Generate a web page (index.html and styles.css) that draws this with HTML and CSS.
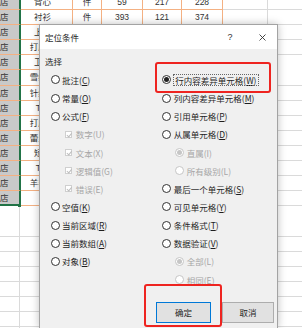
FILE: index.html
```html
<!DOCTYPE html>
<html lang="zh-CN">
  <head>
    <meta charset="UTF-8" />
    <title>定位条件</title>
    <link rel="stylesheet" href="styles.css">
  </head>
  <body>
    <div class="sheet">
      <div class="row"><span class="sel">店</span><span>背心</span><span>件</span><span>59</span><span>217</span><span>228</span></div>
      <div class="row"><span class="sel">店</span><span>衬衫</span><span>件</span><span>393</span><span>121</span><span>374</span></div>
      <div class="row"><span class="sel">店</span><span>上衣</span><span></span><span></span><span></span><span></span></div>
      <div class="row"><span class="sel">店</span><span>打底衫</span><span></span><span></span><span></span><span></span></div>
      <div class="row"><span class="sel">店</span><span>卫衣</span><span></span><span></span><span></span><span></span></div>
      <div class="row"><span class="sel">店</span><span>雪纺衫</span><span></span><span></span><span></span><span></span></div>
      <div class="row"><span class="sel">店</span><span>针织衫</span><span></span><span></span><span></span><span></span></div>
      <div class="row"><span class="sel">店</span><span>T恤</span><span></span><span></span><span></span><span></span></div>
      <div class="row"><span class="sel">店</span><span>打底裤</span><span></span><span></span><span></span><span></span></div>
      <div class="row"><span class="sel">店</span><span>蕾丝裙</span><span></span><span></span><span></span><span></span></div>
      <div class="row"><span class="sel">店</span><span>短裙</span><span></span><span></span><span></span><span></span></div>
      <div class="row"><span class="sel">店</span><span>T恤</span><span></span><span></span><span></span><span></span></div>
      <div class="row"><span class="sel">店</span><span>羊毛衫</span><span></span><span></span><span></span><span></span></div>
      <div class="row"><span class="sel">店</span><span></span><span></span><span></span><span></span><span></span></div>
    </div>
    <div class="handle"></div>

    <div class="dialog">
      <div class="titlebar">
        <span class="title">定位条件</span>
        <span class="help">?</span>
        <span class="close">
          <svg width="7" height="7" viewBox="0 0 7 7"><path d="M0.5 0.5L6.5 6.5M6.5 0.5L0.5 6.5" stroke="#333" stroke-width="0.9" /></svg>
        </span>
      </div>
      <div class="dialog-body">
        <div class="group-label">选择</div>
        <div class="options">
          <div class="col">
            <label class="opt"><span class="radio"></span>批注(<u>C</u>)</label>
            <label class="opt"><span class="radio"></span>常量(<u>O</u>)</label>
            <label class="opt"><span class="radio"></span>公式(<u>F</u>)</label>
            <label class="opt off"><span class="check"></span>数字(U)</label>
            <label class="opt off"><span class="check"></span>文本(X)</label>
            <label class="opt off"><span class="check"></span>逻辑值(G)</label>
            <label class="opt off"><span class="check"></span>错误(E)</label>
            <label class="opt"><span class="radio"></span>空值(<u>K</u>)</label>
            <label class="opt"><span class="radio"></span>当前区域(<u>R</u>)</label>
            <label class="opt"><span class="radio"></span>当前数组(<u>A</u>)</label>
            <label class="opt"><span class="radio"></span>对象(<u>B</u>)</label>
          </div>
          <div class="col">
            <label class="opt"><span class="radio on"></span><span class="focus">行内容差异单元格(<u>W</u>)</span></label>
            <label class="opt"><span class="radio"></span>列内容差异单元格(<u>M</u>)</label>
            <label class="opt"><span class="radio"></span>引用单元格(<u>P</u>)</label>
            <label class="opt"><span class="radio"></span>从属单元格(<u>D</u>)</label>
            <label class="opt sub off"><span class="radio on"></span>直属(I)</label>
            <label class="opt sub off"><span class="radio"></span>所有级别(L)</label>
            <label class="opt"><span class="radio"></span>最后一个单元格(<u>S</u>)</label>
            <label class="opt"><span class="radio"></span>可见单元格(<u>Y</u>)</label>
            <label class="opt"><span class="radio"></span>条件格式(<u>T</u>)</label>
            <label class="opt"><span class="radio"></span>数据验证(<u>V</u>)</label>
            <label class="opt sub off"><span class="radio on"></span>全部(L)</label>
            <label class="opt sub off"><span class="radio"></span>相同(E)</label>
          </div>
        </div>
        <div class="actions">
          <button class="btn default">确定</button>
          <button class="btn">取消</button>
        </div>
      </div>
    </div>

    <div class="mark mark-row"></div>
    <div class="mark mark-ok"></div>
  </body>
</html>
```

FILE: styles.css
```css
body {
  margin: 0;
  width: 302px;
  height: 328px;
  overflow: hidden;
  position: relative;
  background: #fff;
  color: #333;
  font-family: 'Liberation Sans', 'Noto Sans CJK SC', sans-serif;
}

/* spreadsheet behind the dialog */
.sheet {
  margin-top: -5px;
  height: 333px;
  background-image:
    linear-gradient(to right, transparent 19px, #dadada 19px 20px, transparent 20px 267px, #dadada 267px 268px, transparent 268px),
    repeating-linear-gradient(to bottom, transparent 0 14.1px, #dadada 14.1px 15.1px);
}
.row {
  display: grid;
  grid-template-columns: 21px 52px 29px 41px 39px 41px;
  width: 223px;
  height: 15.1px;
}
.row > span {
  border-right: 1px solid #f4b183;
  border-bottom: 1px solid #f4b183;
  background: #fff;
  font-size: 8.5px;
  line-height: 14px;
  text-align: center;
  white-space: nowrap;
  overflow: hidden;
}
.row > span:nth-child(2) {
  padding-right: 8px;
}
.row > .sel {
  background: #c9c9c9;
  text-align: left;
  border-right: 2px solid #217346;
}
.row:last-child > .sel {
  border-bottom: 2px solid #217346;
}
.handle {
  position: absolute;
  left: 18px;
  top: 204px;
  width: 3px;
  height: 3px;
  background: #217346;
}

/* dialog */
.dialog {
  position: absolute;
  left: 39px;
  top: 24px;
  width: 237px;
  height: 303px;
  border: 1px solid #a3a3a3;
  border-bottom: none;
  background: #f0f0f0;
  box-shadow: 0 0 8px rgba(0, 0, 0, 0.25);
  font-family: 'Noto Sans CJK SC', sans-serif;
  font-size: 8.5px;
  color: #1e1e1e;
}
.titlebar {
  display: flex;
  align-items: center;
  height: 24px;
  padding-left: 5px;
  background: #fff;
}
.title {
  flex: 1;
}
.help {
  width: 20px;
  margin-right: 10px;
  text-align: center;
  font-family: 'Liberation Sans', sans-serif;
  font-size: 9px;
  color: #333;
}
.close {
  width: 24px;
  margin-right: 3px;
  display: flex;
  justify-content: center;
}
.dialog-body {
  padding: 5px 3px 0 5px;
}
.group-label {
  line-height: 14px;
}
.options {
  display: flex;
  margin: 2.9px 0 0 5.5px;
}
.col {
  width: 115px;
  display: flex;
  flex-direction: column;
}
.opt {
  height: 18.15px;
  display: flex;
  align-items: center;
  line-height: 12px;
  white-space: nowrap;
}
.opt u {
  text-underline-offset: 1px;
}
.radio {
  flex: none;
  width: 9px;
  height: 9px;
  box-sizing: border-box;
  margin-right: 2.5px;
  border: 1px solid #333;
  border-radius: 50%;
  background: #fff;
  display: flex;
  align-items: center;
  justify-content: center;
}
.radio.on::after {
  content: '';
  width: 5px;
  height: 5px;
  border-radius: 50%;
  background: #222;
}
.opt.sub {
  padding-left: 13px;
}
.opt.off {
  color: #a6a6a6;
}
.opt.off .radio {
  border-color: #c6c6c6;
}
.opt.off .radio.on::after {
  background: #c6c6c6;
}
.check {
  flex: none;
  position: relative;
  width: 7px;
  height: 7px;
  box-sizing: border-box;
  margin: 0 3.7px 0 14.5px;
  border: 1px solid #cfcfcf;
  background: #fff;
}
.check::after {
  content: '';
  position: absolute;
  left: 1.5px;
  top: 0;
  width: 1.5px;
  height: 3.5px;
  border-right: 1px solid #bdbdbd;
  border-bottom: 1px solid #bdbdbd;
  transform: rotate(40deg);
}
.focus {
  padding: 0 1.5px;
  line-height: 10px;
  outline: 1px dotted #666;
}
.actions {
  display: flex;
  justify-content: flex-end;
  gap: 11px;
  margin-top: 13.3px;
}
.btn {
  width: 52px;
  height: 21px;
  box-sizing: border-box;
  padding: 0;
  border: 1px solid #adadad;
  background: #e1e1e1;
  font: inherit;
  color: #1e1e1e;
}
.btn.default {
  width: 55px;
  border-color: #0078d7;
}

/* red annotation boxes */
.mark {
  position: absolute;
  box-sizing: border-box;
  border: 2px solid #ee2420;
  border-radius: 3px;
}
.mark-row {
  left: 155px;
  top: 61.5px;
  width: 115.5px;
  height: 31px;
}
.mark-ok {
  left: 144px;
  top: 284px;
  width: 78px;
  height: 43px;
}
```
